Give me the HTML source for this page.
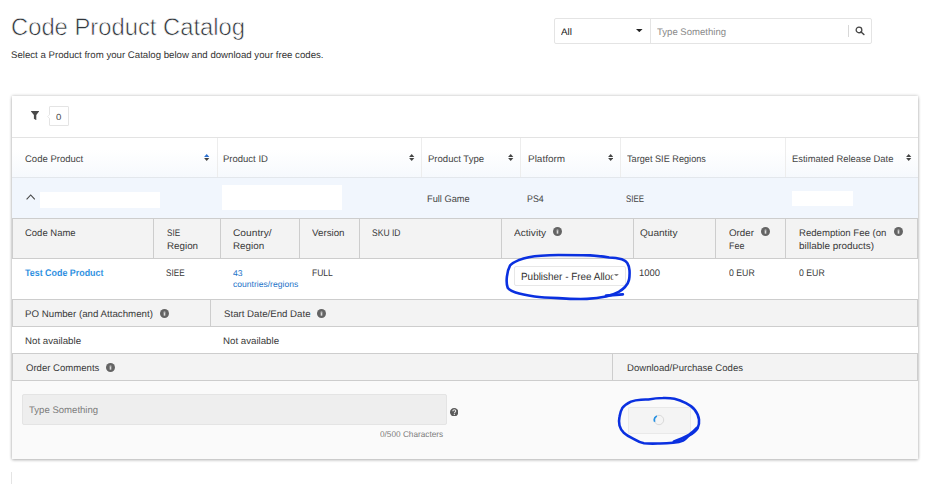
<!DOCTYPE html>
<html><head><meta charset="utf-8">
<style>
*{box-sizing:border-box;margin:0;padding:0}
html,body{width:946px;height:484px;overflow:hidden;background:#fff}
body{font-family:"Liberation Sans",sans-serif;position:relative;text-rendering:geometricPrecision}
.abs{position:absolute}
.t{position:absolute;white-space:nowrap;line-height:14px;transform-origin:0 0}
.r{position:absolute}
</style></head><body>
<!-- search -->
<div class="r" style="left:554px;top:18px;width:317.9px;height:25.5px;border:1px solid #e4e4e4;border-radius:2px;background:#fff"></div>
<div class="r" style="left:650px;top:19px;width:1px;height:24px;background:#e4e4e4"></div>
<div class="r" style="left:848px;top:25px;width:1px;height:11.5px;background:#d8d8d8"></div>
<svg class="abs" style="left:636.3px;top:29.3px" width="6.6" height="3.2" viewBox="0 0 6.6 3.2"><path d="M0 0 H6.6 L3.3 3.2 Z" fill="#222"/></svg>
<svg class="abs" style="left:854.8px;top:26.3px" width="10.4" height="9.6" viewBox="0 0 10.4 9.6"><circle cx="4" cy="3.9" r="2.85" fill="none" stroke="#454545" stroke-width="1.3"/><path d="M6.1 6 L8.9 8.5" stroke="#454545" stroke-width="1.5" stroke-linecap="round"/></svg>

<!-- panel -->
<div class="r" style="left:12px;top:95.5px;width:906px;height:363.5px;background:#fff;box-shadow:0 0 3px rgba(0,0,0,.29),0 1.5px 3px rgba(0,0,0,.14)"></div>
<!-- next panel hint -->
<div class="r" style="left:11px;top:472px;width:1.2px;height:12px;background:#e4e4e4"></div>

<!-- filter -->
<svg class="abs" style="left:31.1px;top:111.3px" width="8.1" height="9.2" viewBox="0 0 8.1 9.2"><path d="M0 0 H8.1 V0.5 L5.3 4 V9.2 L2.9 7.8 V4 L0 0.5 Z" fill="#4a4a4a"/></svg>
<div class="r" style="left:49.3px;top:106.2px;width:19.4px;height:19.4px;border:1px solid #e4e4e4;background:#fff;border-radius:1px"></div>
<svg class="abs" style="left:47.2px;top:113.6px" width="3.2" height="5.2" viewBox="0 0 3.2 5.2"><path d="M3.2 0 L0.6 2.6 L3.2 5.2" fill="#fff" stroke="#e6e6e6" stroke-width="0.9"/></svg>
<div class="r" style="left:12px;top:137px;width:906px;height:1px;background:#e3e3e3"></div>

<!-- main header row -->
<div class="r" style="left:12px;top:138px;width:906px;height:39px;background:linear-gradient(#fff,#fff 30%,#f6f9fd)"></div>
<div class="r" style="left:217px;top:138px;width:1px;height:39px;background:#ededed"></div><div class="r" style="left:421px;top:138px;width:1px;height:39px;background:#ededed"></div><div class="r" style="left:520.4px;top:138px;width:1px;height:39px;background:#ededed"></div><div class="r" style="left:620px;top:138px;width:1px;height:39px;background:#ededed"></div><div class="r" style="left:785.2px;top:138px;width:1px;height:39px;background:#ededed"></div>
<div class="r" style="left:12px;top:177px;width:906px;height:1px;background:#e3e7ec"></div>
<svg class="abs" style="left:204.30px;top:154px" width="5.4" height="7" viewBox="0 0 5.4 7"><path d="M0.1 3 L2.7 0 L5.3 3 Z" fill="#2a6fd0"/><path d="M0.1 3.9 L2.7 7 L5.3 3.9 Z" fill="#444"/></svg><svg class="abs" style="left:409.30px;top:154px" width="5.4" height="7" viewBox="0 0 5.4 7"><path d="M0.1 3 L2.7 0 L5.3 3 Z" fill="#444"/><path d="M0.1 3.9 L2.7 7 L5.3 3.9 Z" fill="#444"/></svg><svg class="abs" style="left:508.30px;top:154px" width="5.4" height="7" viewBox="0 0 5.4 7"><path d="M0.1 3 L2.7 0 L5.3 3 Z" fill="#444"/><path d="M0.1 3.9 L2.7 7 L5.3 3.9 Z" fill="#444"/></svg><svg class="abs" style="left:607.70px;top:154px" width="5.4" height="7" viewBox="0 0 5.4 7"><path d="M0.1 3 L2.7 0 L5.3 3 Z" fill="#444"/><path d="M0.1 3.9 L2.7 7 L5.3 3.9 Z" fill="#444"/></svg><svg class="abs" style="left:906.30px;top:154px" width="5.4" height="7" viewBox="0 0 5.4 7"><path d="M0.1 3 L2.7 0 L5.3 3 Z" fill="#444"/><path d="M0.1 3.9 L2.7 7 L5.3 3.9 Z" fill="#444"/></svg>

<!-- expanded row -->
<div class="r" style="left:12px;top:178px;width:906px;height:40px;background:#f1f6fd"></div>
<svg class="abs" style="left:25.8px;top:194.4px" width="9.4" height="5.8" viewBox="0 0 9.4 5.8"><path d="M0.6 5.4 L4.7 1 L8.8 5.4" fill="none" stroke="#444" stroke-width="1.1"/></svg>
<div class="r" style="left:39.8px;top:192px;width:120.2px;height:15.6px;background:#fff"></div>
<div class="r" style="left:221.8px;top:185px;width:120.3px;height:24.8px;background:#fff"></div>
<div class="r" style="left:792px;top:191px;width:60.8px;height:14.7px;background:#fff"></div>

<!-- inner table -->
<div class="r" style="left:12px;top:218px;width:906px;height:41px;background:#f3f3f3;border:1px solid #cdcdcd"></div>
<div class="r" style="left:153.1px;top:218px;width:1px;height:41px;background:#cdcdcd"></div><div class="r" style="left:219.7px;top:218px;width:1px;height:41px;background:#cdcdcd"></div><div class="r" style="left:299.1px;top:218px;width:1px;height:41px;background:#cdcdcd"></div><div class="r" style="left:358.8px;top:218px;width:1px;height:41px;background:#cdcdcd"></div><div class="r" style="left:500.5px;top:218px;width:1px;height:41px;background:#cdcdcd"></div><div class="r" style="left:632.8px;top:218px;width:1px;height:41px;background:#cdcdcd"></div><div class="r" style="left:715.1px;top:218px;width:1px;height:41px;background:#cdcdcd"></div><div class="r" style="left:785.2px;top:218px;width:1px;height:41px;background:#cdcdcd"></div>
<div class="r" style="left:12px;top:259px;width:906px;height:40px;background:#fff"></div>

<!-- PO row -->
<div class="r" style="left:12px;top:298.7px;width:906px;height:28px;background:#f3f3f3;border:1px solid #cdcdcd"></div>
<div class="r" style="left:210.2px;top:298.7px;width:1px;height:28px;background:#cdcdcd"></div>
<!-- comments header -->
<div class="r" style="left:12px;top:353px;width:906px;height:27.7px;background:#f3f3f3;border:1px solid #cdcdcd"></div>
<div class="r" style="left:612px;top:353px;width:1px;height:27.7px;background:#cdcdcd"></div>
<div class="r" style="left:12px;top:380.7px;width:906px;height:78.3px;background:#fafafa"></div>

<!-- textarea -->
<div class="r" style="left:22.3px;top:394.3px;width:424.6px;height:30.4px;background:#eee;border:1px solid #e4e4e4;border-radius:2px"></div>
<svg class="abs" style="left:450px;top:407.8px" width="8.4" height="8.4" viewBox="0 0 10 10"><circle cx="5" cy="5" r="5" fill="#5a5a5a"/><path d="M3.4 3.9 C3.4 2.6 4.2 2.1 5.1 2.1 C6 2.1 6.8 2.7 6.8 3.6 C6.8 4.8 5.2 4.9 5.2 6.3" fill="none" stroke="#e6e6e6" stroke-width="1.3"/><rect x="4.5" y="7" width="1.4" height="1.3" fill="#e6e6e6"/></svg>

<!-- button + spinner -->
<div class="r" style="left:628.2px;top:407px;width:62.8px;height:27px;background:#f4f4f4;border:1px solid #e9e9e9;border-radius:1px"></div>
<svg class="abs" style="left:653px;top:414.2px" width="12" height="12" viewBox="0 0 12 12"><circle cx="6" cy="6" r="4.7" fill="none" stroke="#d9d9d9" stroke-width="1"/><path d="M3.84 1.94 A4.6 4.6 0 0 0 1.73 7.72" fill="none" stroke="#2490e2" stroke-width="1.7"/></svg>

<!-- select -->
<div class="r" style="left:514.3px;top:266.2px;width:111.5px;height:19.4px;background:#fff;border:1px solid #e7e7e7;border-radius:2px"></div>
<div class="t" style="left:521.2px;top:270.5px;font-size:10.4px;color:#333;width:97px;overflow:hidden;transform:scaleX(.955);line-height:14px">Publisher - Free Allocation</div>
<div class="r" style="left:611px;top:268px;width:13px;height:16px;background:linear-gradient(90deg,rgba(255,255,255,0),#fff 30%)"></div>
<svg class="abs" style="left:613.9px;top:273.7px" width="4.8" height="2.6" viewBox="0 0 4.8 2.6"><path d="M0 0 H4.8 L2.4 2.6 Z" fill="#808080"/></svg>

<!-- info icons -->
<svg class="abs" style="left:553.20px;top:227.40px" width="9.0" height="9.0" viewBox="0 0 10 10"><circle cx="5" cy="5" r="5" fill="#646464"/><rect x="4.1" y="2.9" width="1.8" height="4.5" fill="#dcdcdc"/><rect x="4.1" y="3.9" width="1.8" height="0.5" fill="#8a8a8a"/></svg><svg class="abs" style="left:761.40px;top:227.40px" width="9.0" height="9.0" viewBox="0 0 10 10"><circle cx="5" cy="5" r="5" fill="#646464"/><rect x="4.1" y="2.9" width="1.8" height="4.5" fill="#dcdcdc"/><rect x="4.1" y="3.9" width="1.8" height="0.5" fill="#8a8a8a"/></svg><svg class="abs" style="left:893.60px;top:227.40px" width="9.0" height="9.0" viewBox="0 0 10 10"><circle cx="5" cy="5" r="5" fill="#646464"/><rect x="4.1" y="2.9" width="1.8" height="4.5" fill="#dcdcdc"/><rect x="4.1" y="3.9" width="1.8" height="0.5" fill="#8a8a8a"/></svg><svg class="abs" style="left:159.70px;top:309.00px" width="9.0" height="9.0" viewBox="0 0 10 10"><circle cx="5" cy="5" r="5" fill="#646464"/><rect x="4.1" y="2.9" width="1.8" height="4.5" fill="#dcdcdc"/><rect x="4.1" y="3.9" width="1.8" height="0.5" fill="#8a8a8a"/></svg><svg class="abs" style="left:317.00px;top:309.00px" width="9.0" height="9.0" viewBox="0 0 10 10"><circle cx="5" cy="5" r="5" fill="#646464"/><rect x="4.1" y="2.9" width="1.8" height="4.5" fill="#dcdcdc"/><rect x="4.1" y="3.9" width="1.8" height="0.5" fill="#8a8a8a"/></svg><svg class="abs" style="left:105.90px;top:363.40px" width="9.0" height="9.0" viewBox="0 0 10 10"><circle cx="5" cy="5" r="5" fill="#646464"/><rect x="4.1" y="2.9" width="1.8" height="4.5" fill="#dcdcdc"/><rect x="4.1" y="3.9" width="1.8" height="0.5" fill="#8a8a8a"/></svg>

<!-- texts -->
<div class="t" style="-webkit-text-stroke:0.6px #fff;left:10.84px;top:21px;font-size:24.0px;color:#30353b;font-weight:400;transform:scaleX(0.9908)">Code Product Catalog</div>
<div class="t" style="left:10.74px;top:49px;font-size:9.6px;color:#333;font-weight:400;transform:scaleX(1.0051)">Select a Product from your Catalog below and download your free codes.</div>
<div class="t" style="left:561.45px;top:26px;font-size:9.5px;color:#222;font-weight:400;transform:scaleX(1.0399)">All</div>
<div class="t" style="left:656.63px;top:26px;font-size:9.6px;color:#8a8a8a;font-weight:400;transform:scaleX(0.9959)">Type Something</div>
<div class="t" style="left:56.3px;top:110px;font-size:8.8px;color:#4a4a4a;font-weight:400;transform:scaleX(1.0946)">0</div>
<div class="t" style="left:24.8px;top:153px;font-size:9.6px;color:#454545;font-weight:400;transform:scaleX(0.9915)">Code Product</div>
<div class="t" style="left:223.33px;top:153px;font-size:9.6px;color:#454545;font-weight:400;transform:scaleX(0.9902)">Product ID</div>
<div class="t" style="left:428.03px;top:153px;font-size:9.6px;color:#454545;font-weight:400;transform:scaleX(0.9944)">Product Type</div>
<div class="t" style="left:527.5px;top:153px;font-size:9.6px;color:#454545;font-weight:400;transform:scaleX(1.0383)">Platform</div>
<div class="t" style="left:626.54px;top:153px;font-size:9.6px;color:#454545;font-weight:400;transform:scaleX(0.9545)">Target SIE Regions</div>
<div class="t" style="left:792.22px;top:153px;font-size:9.6px;color:#454545;font-weight:400;transform:scaleX(0.9805)">Estimated Release Date</div>
<div class="t" style="left:427.34px;top:193px;font-size:9.6px;color:#454545;font-weight:400;transform:scaleX(0.963)">Full Game</div>
<div class="t" style="left:527.08px;top:193px;font-size:9.6px;color:#454545;font-weight:400;transform:scaleX(0.9219)">PS4</div>
<div class="t" style="left:625.98px;top:193px;font-size:9.6px;color:#454545;font-weight:400;transform:scaleX(0.8249)">SIEE</div>
<div class="t" style="left:25.4px;top:227px;font-size:9.6px;color:#3a3a3a;font-weight:400;transform:scaleX(0.9876)">Code Name</div>
<div class="t" style="left:166.86px;top:227px;font-size:9.6px;color:#3a3a3a;font-weight:400;transform:scaleX(0.8511)">SIE</div>
<div class="t" style="left:166.81px;top:240px;font-size:9.6px;color:#3a3a3a;font-weight:400;transform:scaleX(1.0204)">Region</div>
<div class="t" style="left:233.25px;top:227px;font-size:9.6px;color:#3a3a3a;font-weight:400;transform:scaleX(1.0643)">Country/</div>
<div class="t" style="left:233.21px;top:240px;font-size:9.6px;color:#3a3a3a;font-weight:400;transform:scaleX(1.0238)">Region</div>
<div class="t" style="left:312.25px;top:227px;font-size:9.6px;color:#3a3a3a;font-weight:400;transform:scaleX(1.0171)">Version</div>
<div class="t" style="left:372.33px;top:227px;font-size:9.6px;color:#3a3a3a;font-weight:400;transform:scaleX(0.8911)">SKU ID</div>
<div class="t" style="left:514.24px;top:227px;font-size:9.6px;color:#3a3a3a;font-weight:400;transform:scaleX(1.0534)">Activity</div>
<div class="t" style="left:639.82px;top:227px;font-size:9.6px;color:#3a3a3a;font-weight:400;transform:scaleX(1.0477)">Quantity</div>
<div class="t" style="left:729.03px;top:227px;font-size:9.6px;color:#3a3a3a;font-weight:400;transform:scaleX(1.0174)">Order</div>
<div class="t" style="left:728.97px;top:240px;font-size:9.6px;color:#3a3a3a;font-weight:400;transform:scaleX(0.9287)">Fee</div>
<div class="t" style="left:798.73px;top:227px;font-size:9.6px;color:#3a3a3a;font-weight:400;transform:scaleX(0.9988)">Redemption Fee (on</div>
<div class="t" style="left:798.9px;top:240px;font-size:9.6px;color:#3a3a3a;font-weight:400;transform:scaleX(1.035)">billable products)</div>
<div class="t" style="-webkit-text-stroke:0.1px #fff;left:25.48px;top:267px;font-size:9.6px;color:#1787de;font-weight:700;transform:scaleX(0.9274)">Test Code Product</div>
<div class="t" style="left:166.36px;top:267px;font-size:9.6px;color:#3a3a3a;font-weight:400;transform:scaleX(0.8492)">SIEE</div>
<div class="t" style="left:232.92px;top:266px;font-size:8.5px;color:#1c72c8;font-weight:400;transform:scaleX(1.0139)">43</div>
<div class="t" style="left:233.08px;top:277px;font-size:8.5px;color:#1c72c8;font-weight:400;transform:scaleX(1.0074)">countries/regions</div>
<div class="t" style="left:312.19px;top:267px;font-size:9.6px;color:#3a3a3a;font-weight:400;transform:scaleX(0.8889)">FULL</div>
<div class="t" style="left:639.21px;top:267px;font-size:9.6px;color:#3a3a3a;font-weight:400;transform:scaleX(0.9842)">1000</div>
<div class="t" style="left:729.05px;top:267px;font-size:9.6px;color:#3a3a3a;font-weight:400;transform:scaleX(0.9094)">0 EUR</div>
<div class="t" style="left:798.55px;top:267px;font-size:9.6px;color:#3a3a3a;font-weight:400;transform:scaleX(0.9094)">0 EUR</div>
<div class="t" style="left:25.42px;top:308px;font-size:9.6px;color:#3a3a3a;font-weight:400;transform:scaleX(1.012)">PO Number (and Attachment)</div>
<div class="t" style="left:223.84px;top:308px;font-size:9.6px;color:#3a3a3a;font-weight:400;transform:scaleX(1.0081)">Start Date/End Date</div>
<div class="t" style="left:24.95px;top:335px;font-size:9.6px;color:#3a3a3a;font-weight:400;transform:scaleX(1.0103)">Not available</div>
<div class="t" style="left:223.45px;top:335px;font-size:9.6px;color:#3a3a3a;font-weight:400;transform:scaleX(1.0103)">Not available</div>
<div class="t" style="left:25.55px;top:362px;font-size:9.6px;color:#3a3a3a;font-weight:400;transform:scaleX(0.9967)">Order Comments</div>
<div class="t" style="left:626.73px;top:362px;font-size:9.6px;color:#3a3a3a;font-weight:400;transform:scaleX(0.9981)">Download/Purchase Codes</div>
<div class="t" style="left:29.33px;top:404px;font-size:9.6px;color:#7d7d7d;font-weight:400;transform:scaleX(0.9973)">Type Something</div>
<div class="t" style="left:380.17px;top:427px;font-size:8.4px;color:#7d7d7d;font-weight:400;transform:scaleX(0.9837)">0/500 Characters</div>

<!-- hand-drawn annotations -->
<svg class="abs" style="left:0;top:0" width="946" height="484" viewBox="0 0 946 484" fill="none" stroke="#0a30e0" stroke-width="2.6" stroke-linecap="round" stroke-linejoin="round">
<path d="M518.8 260.1 C526 257.2 533 256.2 541 255.7 C547 255.2 552 255 558.4 255 C569 255 580 255.1 590.1 255.4 C597 255.8 603 256.6 609.2 257.5 C614 257.6 618 258.2 621.8 259.3 C624.5 260.2 626.4 261.4 627.4 263.2 C628.8 265.5 629.4 268 629.5 270.4 C629.7 273.5 629.6 276.8 629 279.9 C628.4 282.6 627 285 625 287 C623.2 288.9 621.2 290.4 618.7 291.8 C614.8 293.9 610.5 295.4 606 296.5 C600 297.8 593.5 298.6 587 298.9 C577.5 299.2 568 298.8 558.4 298.1 C550.3 297.8 542.3 297.5 534.6 296.5 C528 295.6 521.5 294.6 515.6 292.6 C512.3 291.5 509.3 290.2 507.7 287.8 C506.3 284.3 506.5 280.3 506.9 276.7 C507.3 272.9 508.2 268.8 510 265.6 C512 262.9 515.3 261.6 518.8 260.1"/>
<path d="M606 295.6 L622.8 294.4" stroke-width="2.8"/>
<path d="M648.4 399.5 C653 398.6 658 398 662.8 398 C666.8 397.9 670.7 398 674.4 398.7 C678.6 399.6 682.4 401.2 686 403.1 C689.3 404.8 692.5 406.8 694.6 409.6 C697 412.5 698.5 416 699 419.7 C699.4 422.7 698.8 425.8 697.5 428.4 C695.6 431.6 692.3 433.8 688.8 435.6 C687 437.5 685.2 439.3 683 440.6 C680 442 676.4 442.5 673 442.8 C668.7 443.3 664.3 443.5 660 443.5 C654.6 443.6 649.2 443.8 644 443.3 C640.3 442.7 637 441 634 439.2 C630.4 437.3 626.8 435.3 623.8 432.7 C621.6 430.7 620.2 428.2 619.5 425.5 C618.8 422.7 618.9 419.6 619.5 416.8 C620 413.7 620.7 410.6 622.3 408.1 C624.4 405.2 627.7 403.2 631 401.6 C634.2 400.4 637.6 399.9 641 399.7 C643.5 399.5 646 399.6 648.4 399.5"/>
<path d="M674 441.6 C679 440 684.5 437.5 689 435 C692 433 695 430.5 697 428" stroke-width="3"/>
</svg>
</body></html>
